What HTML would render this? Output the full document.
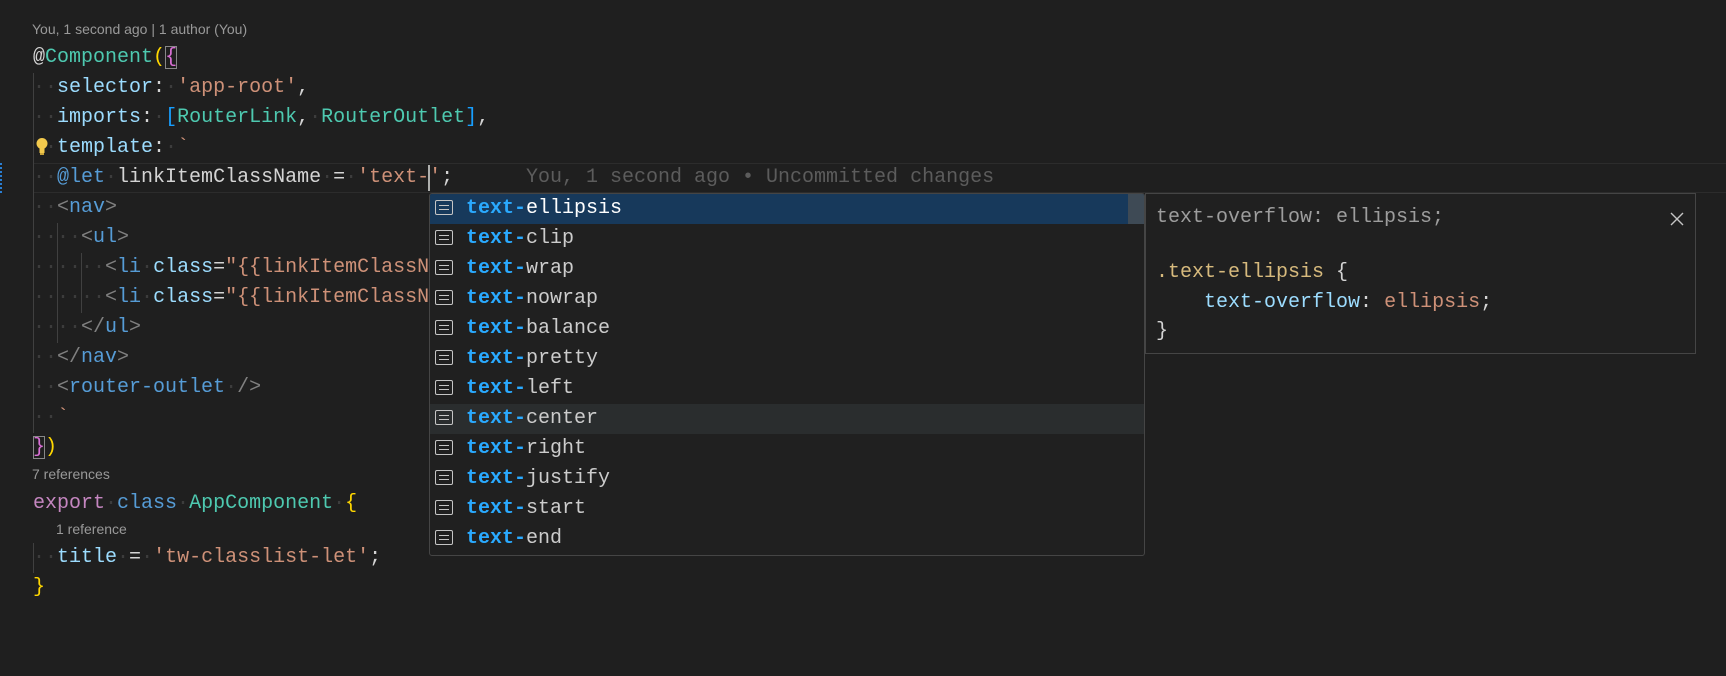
<!DOCTYPE html>
<html><head><meta charset="utf-8"><style>
body{margin:0;width:1726px;height:676px;background:#1f1f1f;overflow:hidden;position:relative;font-family:"Liberation Mono",monospace;font-size:20px;}
.l{position:absolute;left:33px;height:30px;line-height:30px;white-space:pre;color:#d4d4d4;}
.cl{position:absolute;font-family:"Liberation Sans",sans-serif;font-size:14px;color:#999;white-space:pre;line-height:20px;}
.d{color:#3c3c3c}
.p{color:#9cdcfe}.s{color:#ce9178}.t{color:#4ec9b0}.y{color:#ffd700}.m{color:#da70d6}.b{color:#179fff}
.g{color:#808080}.k{color:#569cd6}.x{color:#c586c0}
.box{outline:1px solid #888;outline-offset:-1px}
.ig{position:absolute;width:1px;background:#404040}
#sug{position:absolute;left:429px;top:193px;width:716px;height:363px;background:#202020;border:1px solid #454545;border-radius:3px;box-sizing:border-box;overflow:hidden}
.r{position:absolute;left:0;width:714px;height:30px;line-height:30px;white-space:pre;color:#cccccc}
.r .pre{color:#2aaaff;font-weight:bold}
.ic{position:absolute;left:5px;top:6px;width:18px;height:15px;border:1.6px solid #c5c5c5;border-radius:2px;box-sizing:border-box}
.ic:before,.ic:after{content:"";position:absolute;left:3px;right:3px;height:1.6px;background:#c5c5c5}
.ic:before{top:3.5px}.ic:after{top:7.5px}
.r .tx{position:absolute;left:36px;top:0}
#det{position:absolute;left:1145px;top:193px;width:551px;height:161px;background:#202020;border:1px solid #454545;box-sizing:border-box}
.dl{position:absolute;left:10px;white-space:pre;line-height:30px;color:#d4d4d4}
</style></head><body>
<div class="cl" style="left:32px;top:19px">You, 1 second ago | 1 author (You)</div>
<div style="position:absolute;left:0;top:163px;width:2px;height:30px;background:repeating-linear-gradient(#2a7fd4 0 2px,transparent 2px 4px)"></div>
<div style="position:absolute;left:33px;top:163px;width:1693px;height:28px;border-top:1px solid #2c2c2c;border-bottom:1px solid #2c2c2c"></div>
<div class="ig" style="left:33px;top:73px;height:360px"></div>
<div class="ig" style="left:57px;top:223px;height:120px"></div>
<div class="ig" style="left:81px;top:253px;height:60px"></div>
<div class="ig" style="left:33px;top:543px;height:30px"></div>
<div class="l" style="top:43px">@<span class="t">Component</span><span class="y">(</span><span class="m box">{</span></div>
<div class="l" style="top:73px"><span class="d">··</span><span class="p">selector</span>:<span class="d">·</span><span class="s">'app-root'</span>,</div>
<div class="l" style="top:103px"><span class="d">··</span><span class="p">imports</span>:<span class="d">·</span><span class="b">[</span><span class="t">RouterLink</span>,<span class="d">·</span><span class="t">RouterOutlet</span><span class="b">]</span>,</div>
<div class="l" style="top:133px"><span class="d">··</span><span class="p">template</span>:<span class="d">·</span><span class="s">`</span></div>
<svg style="position:absolute;left:36px;top:137px" width="12" height="20" viewBox="0 0 12 20"><circle cx="6" cy="6.5" r="5.5" fill="#f2c94c"/><rect x="3.5" y="10" width="5" height="6" fill="#f2c94c"/><rect x="4" y="16" width="4" height="2" fill="#c9a43a"/></svg>
<div class="l" style="top:163px"><span class="d">··</span><span class="k">@let</span><span class="d">·</span>linkItemClassName<span class="d">·</span>=<span class="d">·</span><span class="s">'text-'</span>;</div>
<div style="position:absolute;left:428px;top:165px;width:2px;height:26px;background:#aeafad"></div>
<div class="l" style="top:163px;left:526px;color:#5c5c5c">You, 1 second ago • Uncommitted changes</div>
<div class="l" style="top:193px"><span class="d">··</span><span class="g">&lt;</span><span class="k">nav</span><span class="g">&gt;</span></div>
<div class="l" style="top:223px"><span class="d">····</span><span class="g">&lt;</span><span class="k">ul</span><span class="g">&gt;</span></div>
<div class="l" style="top:253px"><span class="d">······</span><span class="g">&lt;</span><span class="k">li</span><span class="d">·</span><span class="p">class</span>=<span class="s">"{{linkItemClassN</span></div>
<div class="l" style="top:283px"><span class="d">······</span><span class="g">&lt;</span><span class="k">li</span><span class="d">·</span><span class="p">class</span>=<span class="s">"{{linkItemClassN</span></div>
<div class="l" style="top:313px"><span class="d">····</span><span class="g">&lt;/</span><span class="k">ul</span><span class="g">&gt;</span></div>
<div class="l" style="top:343px"><span class="d">··</span><span class="g">&lt;/</span><span class="k">nav</span><span class="g">&gt;</span></div>
<div class="l" style="top:373px"><span class="d">··</span><span class="g">&lt;</span><span class="k">router-outlet</span><span class="d">·</span><span class="g">/&gt;</span></div>
<div class="l" style="top:403px"><span class="d">··</span><span class="s">`</span></div>
<div class="l" style="top:433px"><span class="m box">}</span><span class="y">)</span></div>
<div class="cl" style="left:32px;top:464px">7 references</div>
<div class="l" style="top:489px"><span class="x">export</span><span class="d">·</span><span class="k">class</span><span class="d">·</span><span class="t">AppComponent</span><span class="d">·</span><span class="y">{</span></div>
<div class="cl" style="left:56px;top:519px">1 reference</div>
<div class="l" style="top:543px"><span class="d">··</span><span class="p">title</span><span class="d">·</span>=<span class="d">·</span><span class="s">'tw-classlist-let'</span>;</div>
<div class="l" style="top:573px"><span class="y">}</span></div>

<div id="sug">
<div class="r" style="top:0;background:#17395b;color:#fff"><div class="ic"></div><span class="tx"><span class="pre">text-</span>ellipsis</span></div>
<div style="position:absolute;right:0;top:0;width:16px;height:30px;background:#3e4a55"></div>
<div class="r" style="top:30px"><div class="ic"></div><span class="tx"><span class="pre">text-</span>clip</span></div>
<div class="r" style="top:60px"><div class="ic"></div><span class="tx"><span class="pre">text-</span>wrap</span></div>
<div class="r" style="top:90px"><div class="ic"></div><span class="tx"><span class="pre">text-</span>nowrap</span></div>
<div class="r" style="top:120px"><div class="ic"></div><span class="tx"><span class="pre">text-</span>balance</span></div>
<div class="r" style="top:150px"><div class="ic"></div><span class="tx"><span class="pre">text-</span>pretty</span></div>
<div class="r" style="top:180px"><div class="ic"></div><span class="tx"><span class="pre">text-</span>left</span></div>
<div class="r" style="top:210px;background:#2a2d2e"><div class="ic"></div><span class="tx"><span class="pre">text-</span>center</span></div>
<div class="r" style="top:240px"><div class="ic"></div><span class="tx"><span class="pre">text-</span>right</span></div>
<div class="r" style="top:270px"><div class="ic"></div><span class="tx"><span class="pre">text-</span>justify</span></div>
<div class="r" style="top:300px"><div class="ic"></div><span class="tx"><span class="pre">text-</span>start</span></div>
<div class="r" style="top:330px"><div class="ic"></div><span class="tx"><span class="pre">text-</span>end</span></div>
</div>

<div id="det">
<div class="dl" style="top:9px;color:#9d9d9d">text-overflow: ellipsis;</div>
<svg style="position:absolute;right:11px;top:18px" width="14" height="14" viewBox="0 0 14 14"><path d="M1 1L13 13M13 1L1 13" stroke="#c5c5c5" stroke-width="1.4"/></svg>
<div class="dl" style="top:64px"><span style="color:#d7ba7d">.text-ellipsis</span> {</div>
<div class="dl" style="top:94px">    <span class="p">text-overflow</span>: <span class="s">ellipsis</span>;</div>
<div class="dl" style="top:123px">}</div>
</div>
</body></html>
